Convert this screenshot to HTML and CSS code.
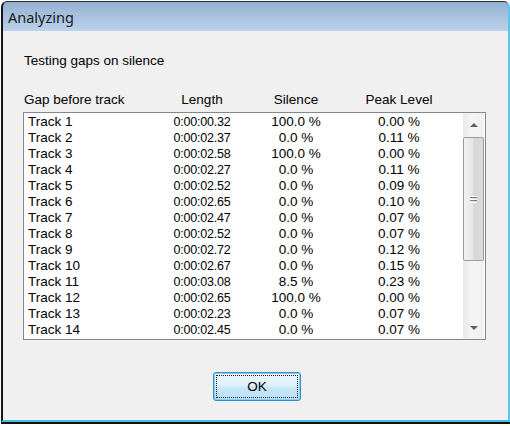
FILE: index.html
```html
<!DOCTYPE html>
<html>

<head>
  <meta charset="UTF-8" />
  <title>Analyzing</title>
  <link rel="stylesheet" href="styles.css">
</head>

<body>
  <div class="window">
    <div class="titlebar">Analyzing</div>

    <div class="client">
      <p class="intro">Testing gaps on silence</p>

      <div class="cols header">
        <span class="name">Gap before track</span>
        <span>Length</span>
        <span>Silence</span>
        <span>Peak Level</span>
      </div>

      <!-- Result list -->
      <div class="listbox">
        <div class="rows">
          <div class="cols row"><span class="name">Track 1</span><span class="len">0:00:00.32</span><span>100.0 %</span><span>0.00 %</span></div>
          <div class="cols row"><span class="name">Track 2</span><span class="len">0:00:02.37</span><span>0.0 %</span><span>0.11 %</span></div>
          <div class="cols row"><span class="name">Track 3</span><span class="len">0:00:02.58</span><span>100.0 %</span><span>0.00 %</span></div>
          <div class="cols row"><span class="name">Track 4</span><span class="len">0:00:02.27</span><span>0.0 %</span><span>0.11 %</span></div>
          <div class="cols row"><span class="name">Track 5</span><span class="len">0:00:02.52</span><span>0.0 %</span><span>0.09 %</span></div>
          <div class="cols row"><span class="name">Track 6</span><span class="len">0:00:02.65</span><span>0.0 %</span><span>0.10 %</span></div>
          <div class="cols row"><span class="name">Track 7</span><span class="len">0:00:02.47</span><span>0.0 %</span><span>0.07 %</span></div>
          <div class="cols row"><span class="name">Track 8</span><span class="len">0:00:02.52</span><span>0.0 %</span><span>0.07 %</span></div>
          <div class="cols row"><span class="name">Track 9</span><span class="len">0:00:02.72</span><span>0.0 %</span><span>0.12 %</span></div>
          <div class="cols row"><span class="name">Track 10</span><span class="len">0:00:02.67</span><span>0.0 %</span><span>0.15 %</span></div>
          <div class="cols row"><span class="name">Track 11</span><span class="len">0:00:03.08</span><span>8.5 %</span><span>0.23 %</span></div>
          <div class="cols row"><span class="name">Track 12</span><span class="len">0:00:02.65</span><span>100.0 %</span><span>0.00 %</span></div>
          <div class="cols row"><span class="name">Track 13</span><span class="len">0:00:02.23</span><span>0.0 %</span><span>0.07 %</span></div>
          <div class="cols row"><span class="name">Track 14</span><span class="len">0:00:02.45</span><span>0.0 %</span><span>0.07 %</span></div>
        </div>

        <div class="scrollbar">
          <div class="sb-btn"><span class="arrow-up"></span></div>
          <div class="sb-thumb">
            <span class="grip"></span>
          </div>
          <div class="sb-track"></div>
          <div class="sb-btn"><span class="arrow-down"></span></div>
        </div>
      </div>

      <div class="footer">
        <button class="ok-btn">OK</button>
      </div>
    </div>
  </div>
</body>

</html>
```

FILE: styles.css
```css
body {
  margin: 0;
  width: 510px;
  height: 426px;
  overflow: hidden;
  background-color: #fff;
  font-family: "Liberation Sans", Arial, sans-serif;
  font-size: 13.5px;
  color: #000;
}

/* Window frame */
.window {
  margin: 1px 0 0 1px;
  width: 509px;
  box-sizing: border-box;
  border-top: 1px solid #2b2b2b;
  border-left: 2px solid #151515;
  border-right: 2px solid #5ac6ec;
  border-bottom: 2px solid #3fc0ea;
  border-radius: 6px 6px 0 0;
  box-shadow: 0 2px 0 #111;
  background: linear-gradient(#95b1d2, #bcd3eb 30px);
}

.titlebar {
  height: 29px;
  box-sizing: border-box;
  padding: 5px 0 0 5px;
  font-family: "Noto Sans", "Open Sans", sans-serif;
  font-size: 14.5px;
  line-height: 20px;
  color: #1a1a1a;
}

.client {
  height: 389px;
  box-sizing: border-box;
  padding: 22px 18px 0 21px;
  background-color: #f0f0f0;
}

.intro {
  margin: 0;
  line-height: 16px;
}

/* Column layout shared by header and rows */
.cols {
  display: grid;
  grid-template-columns: 130px 96px 92px 114px;
  line-height: 16px;
  text-align: center;
  white-space: nowrap;
}

.cols .name {
  text-align: left;
}

.header {
  margin-top: 23px;
}

.listbox {
  display: flex;
  margin: 4px 0 0 -1px;
  width: 463px;
  height: 228px;
  box-sizing: border-box;
  border: 1px solid #828790;
  background-color: #fff;
}

.rows {
  flex: 1;
  padding-top: 1px;
}

.row .name {
  padding-left: 4px;
}

.row .len {
  font-size: 12.5px;
  letter-spacing: -0.2px;
}

/* Scrollbar */
.scrollbar {
  width: 21px;
  margin-right: 1px;
  display: flex;
  flex-direction: column;
  background: linear-gradient(90deg, #e9e9e9, #f4f4f4 40%, #f0f0f0);
}

.sb-btn {
  height: 23px;
  display: flex;
  justify-content: center;
  align-items: center;
}

.arrow-up,
.arrow-down {
  width: 0;
  height: 0;
  border-left: 4px solid transparent;
  border-right: 4px solid transparent;
}

.arrow-up {
  border-bottom: 4px solid #606060;
}

.arrow-down {
  border-top: 4px solid #606060;
}

.sb-thumb {
  height: 124px;
  margin-top: 1px;
  box-sizing: border-box;
  border: 1px solid #9b9b9b;
  border-radius: 2px;
  background: linear-gradient(90deg, #f2f2f2, #e6e6e6 45%, #d6d6d6 55%, #dcdcdc);
  display: flex;
  justify-content: center;
  align-items: center;
}

.grip {
  width: 7px;
  height: 7px;
  background: repeating-linear-gradient(#fff 0, #fff 1px, #7e7e7e 1px, #7e7e7e 2px, transparent 2px, transparent 3px);
}

.sb-track {
  flex: 1;
}

/* Dialog button */
.footer {
  display: flex;
  justify-content: center;
  margin-top: 32px;
}

.ok-btn {
  width: 88px;
  height: 29px;
  border: 1px solid #2c8fd0;
  border-radius: 3px;
  background: linear-gradient(#ebf6fd, #e0f2fc 45%, #c6e6f8 55%, #b9dff4);
  box-shadow: inset 0 0 0 1px #7fd0f5;
  font-family: "Liberation Sans", Arial, sans-serif;
  font-size: 13.5px;
  color: #000;
  outline: 1px dotted #3a1a10;
  outline-offset: -4px;
  padding: 0;
}
```
